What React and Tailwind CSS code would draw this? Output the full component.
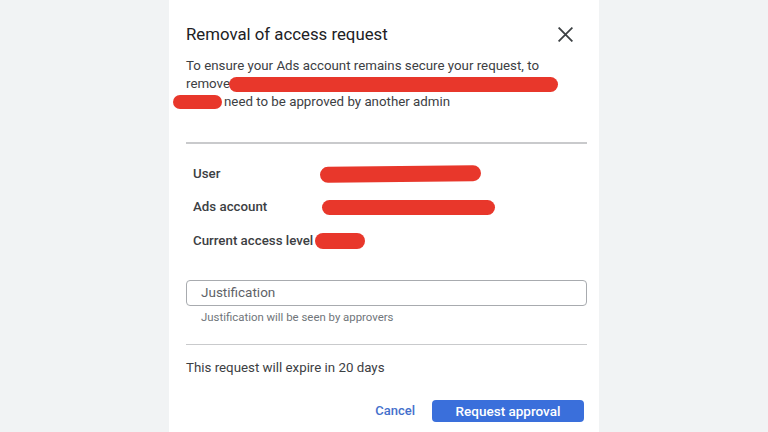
import React from "react";

function Redact({ w, h = 14, className = "" }) {
  return (
    <span
      className={`inline-block rounded-full bg-[#e8372b] align-middle ${className}`}
      style={{ width: w, height: h }}
    />
  );
}

export default function App() {
  return (
    <div
      className="flex h-[432px] w-[768px] justify-center overflow-hidden bg-[#f1f3f4]"
      style={{ fontFamily: "Roboto, 'Noto Sans', sans-serif" }}
    >
      <div className="flex w-[430px] flex-col bg-white pl-[17px] pr-[12px] pt-[22px]">
        <div className="flex h-[24px] items-center justify-between">
          <h1 className="text-[16.8px] leading-[24px] text-[#202124]">Removal of access request</h1>
          <svg width="15" height="15" viewBox="0 0 15 15" className="mr-[14px]">
            <path d="M1.2 1.2 L13.8 13.8 M13.8 1.2 L1.2 13.8" stroke="#3c4043" strokeWidth="1.8" strokeLinecap="square" />
          </svg>
        </div>
        <div className="mt-[11px] text-[13.3px] leading-[18px] text-[#3c4043]">
          <div>To ensure your Ads account remains secure your request, to</div>
          <div className="flex items-center">
            remove
            <Redact w={329} h={15} className="-ml-[1px]" />
          </div>
          <div className="flex items-center">
            <Redact w={49} h={14} className="-ml-[13px] mr-[2px]" />
            need to be approved by another admin
          </div>
        </div>
        <div className="mt-[31px] h-[1.5px] bg-[#c9cacc]" />
        <div className="mt-[21px] flex flex-col gap-[15.5px] pl-[7px] text-[13.3px] font-medium leading-[18px] text-[#3c4043]">
          <div className="flex h-[18px] items-center">
            <span className="w-[127px]">User</span>
            <Redact w={161} h={16} className="-rotate-[0.6deg]" />
          </div>
          <div className="flex h-[18px] items-center">
            <span className="w-[129px]">Ads account</span>
            <Redact w={173} h={15} />
          </div>
          <div className="flex h-[18px] items-center">
            <span>Current access level</span>
            <Redact w={50} h={16} className="ml-[2px]" />
          </div>
        </div>
        <div className="mt-[30px] flex h-[26px] items-center rounded-[4px] border border-[#a8abaf] pl-[14px] text-[13.5px] text-[#5f6368]">
          Justification
        </div>
        <div className="mt-[4px] pl-[15px] text-[11.4px] leading-[14px] text-[#70757a]">
          Justification will be seen by approvers
        </div>
        <div className="mt-[20px] h-[1.5px] bg-[#c9cacc]" />
        <div className="mt-[14px] text-[13.3px] leading-[18px] text-[#3c4043]">
          This request will expire in 20 days
        </div>
        <div className="mt-[23px] flex items-center justify-end pr-[3px]">
          <span className="mr-[17px] text-[13px] font-medium text-[#4470cc]">Cancel</span>
          <div className="flex h-[22px] w-[152px] items-center justify-center rounded-[4px] bg-[#3a6fdb] text-[13.5px] font-medium text-white">
            Request approval
          </div>
        </div>
      </div>
    </div>
  );
}
